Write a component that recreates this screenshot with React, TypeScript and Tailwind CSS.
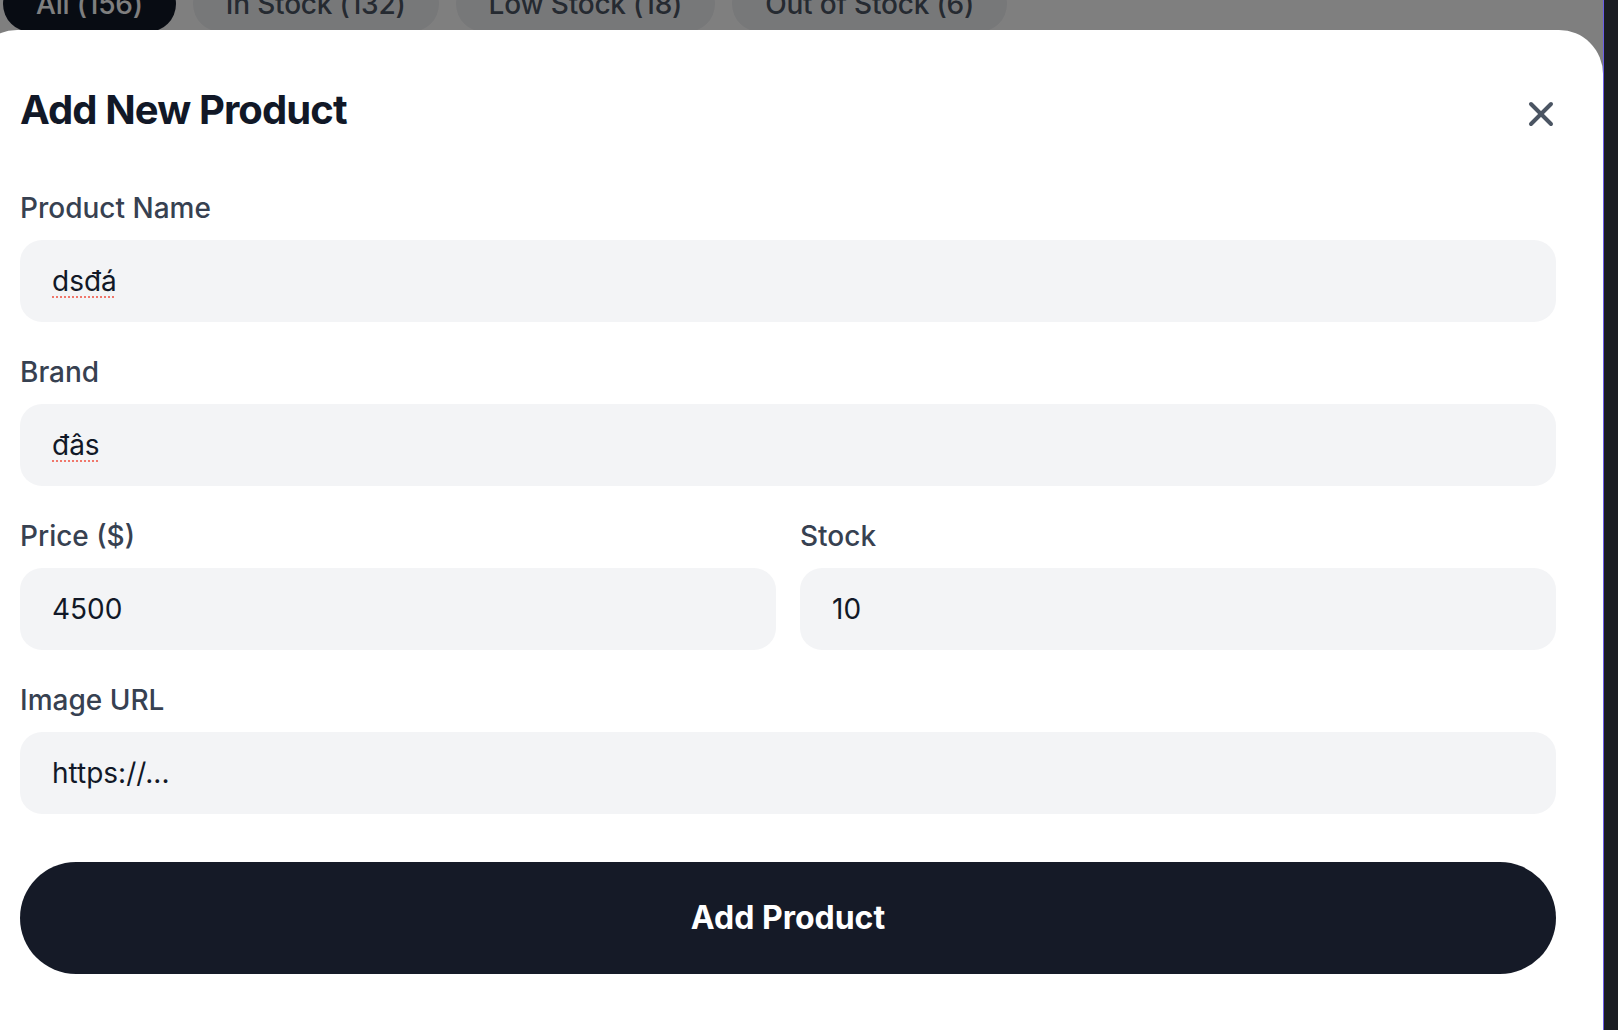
import React from "react";
import { X } from "lucide-react";

const font = { fontFamily: "Inter, 'Noto Sans', sans-serif" };

function Field({ label, children, className = "" }: { label: string; children: React.ReactNode; className?: string }) {
  return (
    <div className={"flex flex-col " + className}>
      <div className="text-[28px] leading-[36px] font-medium text-[#374151]">{label}</div>
      <div className="mt-[14px] flex h-[82px] items-center rounded-[22px] bg-[#f3f4f6] pl-[32px] text-[28px] leading-[36px] text-[#111827]">
        {children}
      </div>
    </div>
  );
}

function Spell({ children }: { children: React.ReactNode }) {
  return (
    <span className="underline decoration-dotted decoration-[#f0776b] decoration-2 underline-offset-[5px]">{children}</span>
  );
}

export default function App() {
  const tabs = ["All (156)", "In Stock (132)", "Low Stock (18)", "Out of Stock (6)"];
  return (
    <div style={font} className="flex h-[1030px] w-[1618px] overflow-hidden">
      <div className="relative flex flex-1 flex-col overflow-hidden bg-white">
        <div className="mt-[-24px] flex h-[56px] shrink-0 gap-[17px] pl-[3px]">
          {tabs.map((t, i) => (
            <div
              key={t}
              className={
                "flex h-[56px] items-center rounded-full px-[33px] text-[28px] leading-[36px] font-medium tracking-[-0.2px] " +
                (i === 0 ? "bg-[#111827] text-white" : "bg-[#eff0f3] text-[#4b5563]")
              }
            >
              {t}
            </div>
          ))}
        </div>
        <div className="absolute inset-0 z-10 bg-black/50" />
        <div className="relative z-20 ml-[-27px] mt-[-2px] flex w-[1630px] flex-1 flex-col rounded-t-[44px] bg-white px-[47px] pt-[56px]">
          <div className="flex items-start justify-between">
            <h2 className="text-[40px] leading-[48px] font-bold tracking-[-0.9px] text-[#111827]">Add New Product</h2>
            <button className="mr-[-5px] mt-[8px] text-[#4b5563]">
              <X size={40} strokeWidth={2.4} />
            </button>
          </div>
          <div className="mt-[56px] flex flex-col gap-[32px]">
            <Field label="Product Name">
              <Spell>dsđá</Spell>
            </Field>
            <Field label="Brand">
              <Spell>đâs</Spell>
            </Field>
            <div className="grid grid-cols-2 gap-[24px]">
              <Field label="Price ($)">4500</Field>
              <Field label="Stock">10</Field>
            </div>
            <Field label="Image URL">https://...</Field>
          </div>
          <button className="mt-[48px] flex h-[112px] w-full items-center justify-center rounded-full bg-[#151a27] text-[32px] font-bold text-white">
            Add Product
          </button>
        </div>
      </div>
      <div className="w-[15px] shrink-0 border-l border-[#6b5ce7] bg-[#1b1d23]" />
    </div>
  );
}
